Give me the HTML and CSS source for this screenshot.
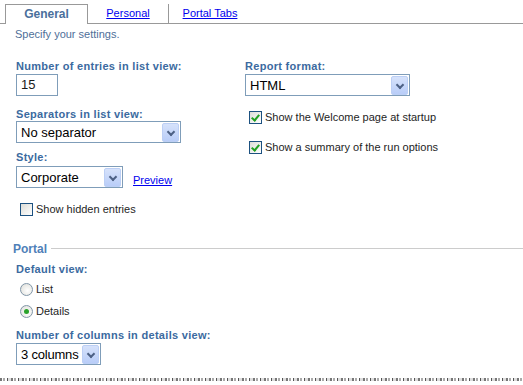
FILE: index.html
```html
<!DOCTYPE html>
<html lang="en">
<head>
  <meta charset="UTF-8">
  <title>Settings</title>
  <link rel="stylesheet" href="styles.css">
</head>
<body>
  <div class="tabs">
    <div class="tab tab-active">General</div>
    <div class="tab tab-sep"><a href="#">Personal</a></div>
    <div class="tab"><a href="#">Portal Tabs</a></div>
  </div>

  <p class="intro">Specify your settings.</p>

  <div class="columns">
    <div class="col-left">
      <div class="label">Number of entries in list view:</div>
      <div class="textbox">15</div>

      <div class="label label-sep">Separators in list view:</div>
      <div class="select select-wide"><span>No separator</span><i class="arrow"></i></div>

      <div class="label label-style">Style:</div>
      <div class="style-row">
        <div class="select select-style"><span>Corporate</span><i class="arrow"></i></div>
        <a href="#" class="preview">Preview</a>
      </div>

      <div class="check check-hidden"><i class="box"></i>Show hidden entries</div>
    </div>

    <div class="col-right">
      <div class="label">Report format:</div>
      <div class="select select-wide select-report"><span>HTML</span><i class="arrow"></i></div>

      <div class="check check-welcome"><i class="box checked"></i>Show the Welcome page at startup</div>
      <div class="check check-summary"><i class="box checked"></i>Show a summary of the run options</div>
    </div>
  </div>

  <div class="legend"><span>Portal</span><hr></div>

  <div class="portal">
    <div class="label">Default view:</div>
    <div class="radio radio-list"><i class="dot"></i>List</div>
    <div class="radio radio-details"><i class="dot selected"></i>Details</div>

    <div class="label label-cols">Number of columns in details view:</div>
    <div class="select select-cols"><span>3 columns</span><i class="arrow"></i></div>
  </div>

  <div class="torn"></div>
</body>
</html>
```

FILE: styles.css
```css
body {
  margin: 0;
  font-family: "Liberation Sans", Arial, sans-serif;
  font-size: 11px;
  color: #1a1a1a;
  background: #fff;
  width: 523px;
  height: 385px;
  overflow: hidden;
}
a {
  color: #0000ee;
}

/* tabs */
.tabs {
  display: flex;
  padding: 4px 0 0 5px;
  border-bottom: 1px solid #999;
  height: 19px;
}
.tab {
  height: 19px;
  line-height: 19px;
  text-align: center;
  font-size: 11px;
}
.tab:nth-child(1) { width: 81px; }
.tab:nth-child(2) { width: 80px; }
.tab:nth-child(3) { width: 82px; }
.tab-active {
  border: 1px solid #999;
  border-bottom: none;
  height: 19px;
  background: #fff;
  margin-bottom: -1px;
  font-weight: bold;
  color: #4a6f9c;
  font-size: 12px;
}
.tab-sep {
  border-right: 1px solid #999;
}

.intro {
  margin: 4px 0 0 15px;
  line-height: 13px;
  color: #4f6f99;
}

.label {
  font-weight: bold;
  color: #3b6aa0;
  line-height: 13px;
  letter-spacing: 0.3px;
}

/* columns */
.columns {
  display: flex;
  padding-left: 16px;
  margin-top: 19px;
}
.col-left {
  width: 229px;
}
.textbox {
  margin-top: 1px;
  width: 36px;
  height: 20px;
  border: 1px solid #7f9db9;
  font-size: 13px;
  line-height: 20px;
  padding-left: 4px;
}
.label-sep { margin-top: 12px; }
.label-style { margin-top: 8px; }

.select {
  display: flex;
  align-items: center;
  justify-content: space-between;
  border: 1px solid #7f9db9;
  height: 20px;
  font-size: 13px;
  padding: 0 1px 0 4px;
  background: #fff;
  color: #000;
}
.select-wide {
  width: 158px;
}
.select-report {
  margin-top: 1px;
}
.select-style {
  width: 100px;
  margin-top: 2px;
}
.arrow {
  width: 15px;
  height: 17px;
  border: 1px solid #bccff5;
  border-radius: 2px;
  background: linear-gradient(#d6e2fb, #b9cdf8);
  position: relative;
}
.arrow::after {
  content: "";
  position: absolute;
  left: 5px;
  top: 5px;
  width: 4px;
  height: 4px;
  border-right: 2px solid #4d6185;
  border-bottom: 2px solid #4d6185;
  transform: rotate(45deg);
}
.style-row {
  display: flex;
  align-items: flex-end;
}
.preview {
  margin: 0 0 2px 10px;
  font-size: 11px;
}

.check, .radio {
  display: flex;
  align-items: center;
  line-height: 13px;
  color: #1e1e1e;
}
.box {
  width: 11px;
  height: 11px;
  border: 1px solid #1c5180;
  background: linear-gradient(135deg, #dcdcd6, #fff);
  margin-right: 3px;
  position: relative;
}
.box.checked::after {
  content: "";
  position: absolute;
  left: 3px;
  top: 1px;
  width: 3px;
  height: 6px;
  border-right: 2px solid #21a121;
  border-bottom: 2px solid #21a121;
  transform: rotate(40deg);
}
.check-hidden {
  margin: 15px 0 0 4px;
}
.col-right .check {
  margin-left: 4px;
}
.check-welcome { margin-top: 15px; }
.check-summary { margin-top: 17px; }

/* portal */
.legend {
  display: flex;
  align-items: center;
  margin: 26px 0 0 13px;
  height: 13px;
}
.legend span {
  font-weight: bold;
  color: #4f80b8;
  font-size: 12px;
  margin-right: 4px;
}
.legend hr {
  flex: 1;
  border: none;
  border-top: 1px solid #ccc;
  margin: 0;
}
.portal {
  padding-left: 16px;
  margin-top: 8px;
}
.dot {
  width: 11px;
  height: 11px;
  border: 1px solid #8196a8;
  border-radius: 50%;
  background: radial-gradient(circle at 60% 60%, #fff, #dcdcd6);
  margin-right: 3px;
  position: relative;
}
.dot.selected::after {
  content: "";
  position: absolute;
  left: 3px;
  top: 3px;
  width: 5px;
  height: 5px;
  border-radius: 50%;
  background: #2aa22a;
}
.radio { margin-left: 4px; }
.radio-list { margin-top: 7px; }
.radio-details { margin-top: 9px; }
.label-cols { margin-top: 11px; }
.select-cols {
  width: 78px;
  margin-top: 1px;
}
.select-cols span {
  letter-spacing: -0.2px;
}

.torn {
  margin-top: 13px;
  height: 3px;
  background: repeating-linear-gradient(90deg, #777 0 2px, #fff 2px 3px, #aaa 3px 5px, #fff 5px 7px, #555 7px 8px, #ddd 8px 11px);
}
```
